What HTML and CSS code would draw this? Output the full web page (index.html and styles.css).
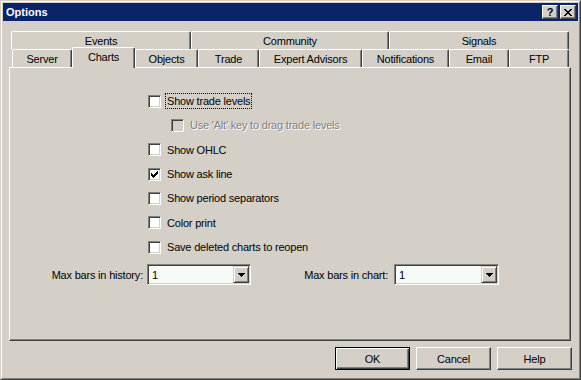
FILE: index.html
```html
<!DOCTYPE html>
<html>
<head>
<meta charset="utf-8">
<title>Options</title>
<link rel="stylesheet" href="styles.css">
</head>
<body>
<div class="window">
  <div class="frame">
    <div class="titlebar">
      <span class="title">Options</span>
      <div class="caption-btns">
        <div class="cap-btn"><span class="q">?</span></div>
        <div class="cap-btn">
          <svg width="8" height="7" viewBox="0 0 8 7"><path d="M0 0h2v1H0zM6 0h2v1H6zM1 1h2v1H1zM5 1h2v1H5zM2 2h4v1H2zM3 3h2v1H3zM2 4h4v1H2zM1 5h2v1H1zM5 5h2v1H5zM0 6h2v1H0zM6 6h2v1H6z" fill="#000"/></svg>
        </div>
      </div>
    </div>
    <div class="content">
      <div class="tabrow back">
        <div class="tab w-events">Events</div>
        <div class="tab w-community">Community</div>
        <div class="tab w-signals">Signals</div>
      </div>
      <div class="tabrow front">
        <div class="tab w-server">Server</div>
        <div class="tab selected w-charts">Charts</div>
        <div class="tab w-objects">Objects</div>
        <div class="tab w-trade">Trade</div>
        <div class="tab w-ea">Expert Advisors</div>
        <div class="tab w-notif">Notifications</div>
        <div class="tab w-email">Email</div>
        <div class="tab w-ftp">FTP</div>
      </div>
      <div class="panel">
        <div class="checks">
          <div class="check-row"><span class="cb"></span><span class="lbl focus">Show trade levels</span></div>
          <div class="check-row sub"><span class="cb disabled"></span><span class="lbl dis">Use 'Alt' key to drag trade levels</span></div>
          <div class="check-row"><span class="cb"></span><span class="lbl">Show OHLC</span></div>
          <div class="check-row"><span class="cb"><svg width="7" height="7" viewBox="0 0 7 7"><path d="M0 2h1v1h1v1h1v-1h1v-1h1v-1h1v-1h1v3h-1v1h-1v1h-1v1h-1v1h-1v-1h-1v-1h-1z" fill="#000"/></svg></span><span class="lbl">Show ask line</span></div>
          <div class="check-row"><span class="cb"></span><span class="lbl">Show period separators</span></div>
          <div class="check-row"><span class="cb"></span><span class="lbl">Color print</span></div>
          <div class="check-row"><span class="cb"></span><span class="lbl">Save deleted charts to reopen</span></div>
        </div>
        <div class="combos">
          <span class="combo-label l1">Max bars in history:</span>
          <div class="combo c1"><span class="value">1</span><span class="drop"><svg width="7" height="4" viewBox="0 0 7 4"><path d="M0 0h7v1h-1v1h-1v1h-1v1h-1v-1h-1v-1h-1v-1h-1z" fill="#000"/></svg></span></div>
          <span class="combo-label l2">Max bars in chart:</span>
          <div class="combo c2"><span class="value">1</span><span class="drop"><svg width="7" height="4" viewBox="0 0 7 4"><path d="M0 0h7v1h-1v1h-1v1h-1v1h-1v-1h-1v-1h-1v-1h-1z" fill="#000"/></svg></span></div>
        </div>
      </div>
      <div class="buttons">
        <div class="btn default">OK</div>
        <div class="btn">Cancel</div>
        <div class="btn">Help</div>
      </div>
    </div>
  </div>
</div>
</body>
</html>
```
FILE: styles.css
```css
html, body {
  margin: 0;
  padding: 0;
  background: #d4d0c8;
}
body {
  font-family: "Liberation Sans", Arial, sans-serif;
  font-size: 11px;
  letter-spacing: -0.2px;
  color: #000;
}
.window {
  width: 581px;
  height: 380px;
  box-sizing: border-box;
  border: 1px solid;
  border-color: #d4d0c8 #404040 #404040 #d4d0c8;
  background: #d4d0c8;
}
.frame {
  height: 100%;
  box-sizing: border-box;
  border: 1px solid;
  border-color: #fff #808080 #808080 #fff;
  padding: 1px;
  display: flex;
  flex-direction: column;
}
.titlebar {
  height: 18px;
  flex: none;
  background: #0a246a;
  display: flex;
  align-items: center;
  padding: 0 2px 0 3px;
}
.title {
  color: #fff;
  font-weight: bold;
  font-size: 11px;
  letter-spacing: 0;
}
.caption-btns {
  margin-left: auto;
  display: flex;
  gap: 2px;
}
.cap-btn {
  width: 16px;
  height: 14px;
  box-sizing: border-box;
  background: #d4d0c8;
  border: 1px solid;
  border-color: #fff #404040 #404040 #fff;
  box-shadow: inset -1px -1px #808080;
  display: flex;
  align-items: center;
  justify-content: center;
}
.q {
  font-weight: bold;
  font-size: 11px;
  line-height: 11px;
  margin-top: 1px;
}
.content {
  flex: 1;
  padding: 10px 7px 0 6px;
  display: flex;
  flex-direction: column;
}
.tabrow {
  display: flex;
  height: 18px;
  flex: none;
}
.tabrow.back {
  padding-left: 2px;
}
.tabrow.front {
  padding-left: 3px;
  align-items: flex-end;
}
.tab {
  box-sizing: border-box;
  height: 18px;
  flex: none;
  border-top: 1px solid #fff;
  border-left: 1px solid #fff;
  border-right: 1px solid #404040;
  box-shadow: inset -1px 0 #808080;
  border-radius: 2px 2px 0 0;
  background: #d4d0c8;
  display: flex;
  align-items: center;
  justify-content: center;
  white-space: nowrap;
}
.tab.selected {
  height: 21px;
  margin-bottom: -1px;
  padding-bottom: 3px;
  position: relative;
  z-index: 1;
}
.w-events { width: 180px; }
.w-community { width: 198px; }
.w-signals { width: 180px; }
.w-server { width: 60px; }
.w-charts { width: 63px; }
.w-objects { width: 63px; }
.w-trade { width: 61px; }
.w-ea { width: 103px; }
.w-notif { width: 87px; }
.w-email { width: 60px; }
.w-ftp { width: 60px; }
.panel {
  height: 274px;
  flex: none;
  box-sizing: border-box;
  border-top: 1px solid #fff;
  border-left: 1px solid #fff;
  border-right: 1px solid #404040;
  border-bottom: 1px solid #404040;
  box-shadow: inset -1px -1px #808080;
  padding-top: 21px;
}
.checks {
  padding-left: 138px;
}
.check-row {
  height: 24.33px;
  display: flex;
  align-items: center;
}
.check-row.sub {
  padding-left: 23px;
}
.cb {
  width: 13px;
  height: 13px;
  flex: none;
  box-sizing: border-box;
  border: 1px solid;
  border-color: #808080 #fff #fff #808080;
  box-shadow: inset 1px 1px #404040, inset -1px -1px #d4d0c8;
  background: #fff;
  display: flex;
  align-items: center;
  justify-content: center;
}
.cb.disabled {
  background: #d4d0c8;
}
.lbl {
  margin-left: 4px;
  padding: 0 1px;
  border: 1px dotted transparent;
  line-height: 14px;
  white-space: nowrap;
}
.lbl.focus {
  border-color: #000;
}
.lbl.dis {
  color: #808080;
  text-shadow: 1px 1px 0 #fff;
}
.combos {
  display: flex;
  align-items: center;
  margin-top: 5px;
}
.combo-label {
  text-align: right;
  white-space: nowrap;
  flex: none;
}
.l1 {
  width: 133px;
  margin-right: 4px;
}
.l2 {
  width: 86px;
  margin-left: 51px;
  margin-right: 6px;
}
.combo {
  height: 21px;
  box-sizing: border-box;
  border: 1px solid;
  border-color: #808080 #fff #fff #808080;
  box-shadow: inset 1px 1px #404040, inset -1px -1px #d4d0c8;
  background: #f7fbf7;
  padding: 1px;
  display: flex;
  align-items: stretch;
  flex: none;
}
.c1 { width: 104px; }
.c2 { width: 105px; }
.value {
  flex: 1;
  padding-left: 3px;
  display: flex;
  align-items: center;
}
.drop {
  width: 16px;
  box-sizing: border-box;
  background: #d4d0c8;
  border: 1px solid;
  border-color: #d4d0c8 #404040 #404040 #d4d0c8;
  box-shadow: inset 1px 1px #fff, inset -1px -1px #808080;
  display: flex;
  align-items: center;
  justify-content: center;
}
.buttons {
  display: flex;
  justify-content: flex-end;
  gap: 6px;
  margin-top: 6px;
  margin-right: -1px;
}
.btn {
  width: 75px;
  height: 23px;
  box-sizing: border-box;
  background: #d4d0c8;
  border: 1px solid;
  border-color: #fff #404040 #404040 #fff;
  box-shadow: inset -1px -1px #808080;
  display: flex;
  align-items: center;
  justify-content: center;
}
.btn.default {
  border-color: #000;
  box-shadow: inset 1px 1px #fff, inset -1px -1px #404040, inset -2px -2px #808080;
}
```
